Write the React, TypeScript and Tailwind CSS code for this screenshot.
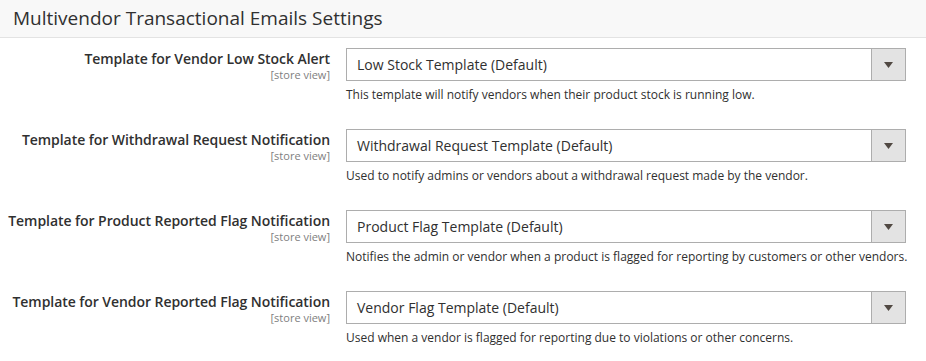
import React from "react";

const rows = [
  {
    label: "Template for Vendor Low Stock Alert",
    value: "Low Stock Template (Default)",
    help: "This template will notify vendors when their product stock is running low.",
  },
  {
    label: "Template for Withdrawal Request Notification",
    value: "Withdrawal Request Template (Default)",
    help: "Used to notify admins or vendors about a withdrawal request made by the vendor.",
  },
  {
    label: "Template for Product Reported Flag Notification",
    value: "Product Flag Template (Default)",
    help: "Notifies the admin or vendor when a product is flagged for reporting by customers or other vendors.",
  },
  {
    label: "Template for Vendor Reported Flag Notification",
    value: "Vendor Flag Template (Default)",
    help: "Used when a vendor is flagged for reporting due to violations or other concerns.",
  },
];

export default function App() {
  return (
    <div
      className="w-[926px] h-[361px] bg-white text-[#303030] overflow-hidden"
      style={{ fontFamily: '"Open Sans", "Noto Sans", sans-serif' }}
    >
      <div className="h-[38px] bg-[#f8f8f8] border-b border-[#e3e3e3] px-[13px] flex items-center">
        <span className="text-[19px] leading-none text-[#303030]">Multivendor Transactional Emails Settings</span>
      </div>
      <div className="pt-[10px]">
        {rows.map((r) => (
          <div key={r.label} className="flex h-[81px]">
            <div className="w-[330px] shrink-0 flex flex-col items-end pt-[2px]">
              <span className="text-[14px] font-semibold leading-[18px] tracking-[-0.06px]">{r.label}</span>
              <span className="text-[11px] leading-[13px] text-[#808080]">[store view]</span>
            </div>
            <div className="ml-[16px] w-[560px] shrink-0">
              <div className="h-[33px] border border-[#adadad] flex">
                <div className="flex-1 flex items-center pl-[10px] text-[14px]">{r.value}</div>
                <div className="w-[34px] border-l border-[#adadad] bg-[#e3e3e3] flex items-center justify-center">
                  <svg width="9" height="6" viewBox="0 0 9 6">
                    <path d="M0 0 H9 L4.5 6 Z" fill="#514943" />
                  </svg>
                </div>
              </div>
              <div className="mt-[6px] text-[12px] leading-[16px] whitespace-nowrap">{r.help}</div>
            </div>
          </div>
        ))}
      </div>
    </div>
  );
}
